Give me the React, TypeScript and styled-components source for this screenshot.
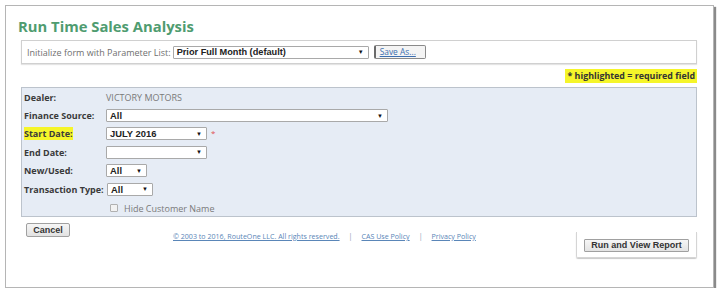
import React from "react";
import styled, { createGlobalStyle } from "styled-components";

const Global = createGlobalStyle`
  html, body { margin: 0; padding: 0; background: #ffffff; }
  body { font-family: "Open Sans", "Liberation Sans", sans-serif; }
`;

const Frame = styled.div`
  box-sizing: border-box;
  margin: 5px 0 0 5px;
  width: 709px;
  height: 283px;
  border: 1px solid #b5b5b5;
  box-shadow: 2px 2px 1px #8a8a8a;
  background: #fff;
  padding: 9px 16px 0 15px;
`;

const Title = styled.h1`
  margin: 0 0 3px -3px;
  font-family: "Open Sans", sans-serif;
  font-size: 14.8px;
  font-weight: 700;
  color: #4f9c70;
  line-height: 22px;
`;

const ParamBox = styled.div`
  box-sizing: border-box;
  height: 24px;
  border: 1px solid #d0d0d0;
  box-shadow: 0 1px 1px #e4e4e4;
  display: flex;
  align-items: center;
  padding-left: 5px;
  gap: 2px;
`;

const ParamLabel = styled.span`
  font-size: 9px;
  color: #6f6f6f;
  white-space: nowrap;
`;

const Select = styled.div<{ $w: number; $h?: number; $fs?: number }>`
  box-sizing: border-box;
  width: ${(p) => p.$w}px;
  height: ${(p) => p.$h ?? 13}px;
  border: 1px solid #a9a9a9;
  border-radius: 1px;
  background: #fff;
  display: flex;
  align-items: center;
  justify-content: space-between;
  padding: 0 4px 0 3px;
  font-family: "Liberation Sans", Arial, sans-serif;
  font-size: ${(p) => p.$fs ?? 9.4}px;
  font-weight: 700;
  color: #222;
  white-space: nowrap;
`;

const Arrow = styled.span`
  font-size: 6px;
  color: #111;
  line-height: 1;
`;

const SaveBtn = styled.button`
  box-sizing: border-box;
  margin-left: 3px;
  height: 14px;
  width: 52px;
  padding: 0 0 0 4px;
  text-align: left;
  border: 1px solid #8a8a8a;
  border-left: 2px solid #6a6a6a;
  border-radius: 2px;
  background: #f4f4f4;
  font-family: "Open Sans", sans-serif;
  font-size: 8.4px;
  color: #3d6fb0;
  text-decoration: underline;
  line-height: 12px;
`;

const NoteRow = styled.div`
  display: flex;
  justify-content: flex-end;
  margin-top: 5px;
  height: 14px;
`;

const Note = styled.span`
  background: #f5f52a;
  font-size: 8.9px;
  font-weight: 700;
  color: #333;
  padding: 0 2px;
  line-height: 14px;
`;

const Panel = styled.div`
  box-sizing: border-box;
  margin-top: 4px;
  height: 130px;
  background: #e6ecf5;
  border: 1px solid #bcc3cc;
  padding: 0 0 0 2px;
`;

const Row = styled.div<{ $h?: number }>`
  display: flex;
  align-items: center;
  height: ${(p) => p.$h ?? 18.4}px;
`;

const Label = styled.span<{ $hl?: boolean; $w?: number }>`
  width: ${(p) => p.$w ?? 82}px;
  flex: none;
  font-size: 9px;
  font-weight: 700;
  color: #3a3a3a;
  white-space: nowrap;
  span {
    background: ${(p) => (p.$hl ? "#f5f52a" : "transparent")};
  }
`;

const Value = styled.span`
  font-size: 9px;
  color: #7a7a7a;
`;

const Req = styled.span`
  color: #e05050;
  font-size: 8px;
  margin-left: 4px;
  margin-top: -3px;
`;

const Check = styled.span`
  box-sizing: border-box;
  width: 8px;
  height: 8px;
  border: 1px solid #b0b0b0;
  border-radius: 1px;
  background: #f2f2f2;
  margin: 0 6px 0 86px;
`;

const CheckLabel = styled.span`
  font-size: 9px;
  color: #7a7a7a;
`;

const Footer = styled.div`
  display: flex;
  align-items: flex-start;
  margin-top: 6px;
`;

const CancelBtn = styled.button`
  box-sizing: border-box;
  margin-left: 5px;
  width: 44px;
  height: 14px;
  padding: 0;
  border: 1px solid #a0a0a0;
  border-radius: 2px;
  background: linear-gradient(#f6f6f6, #e2e2e2);
  font-family: "Liberation Sans", Arial, sans-serif;
  font-size: 9px;
  font-weight: 700;
  color: #333;
  line-height: 12px;
`;

const Links = styled.div`
  margin: 8px 0 0 103px;
  display: flex;
  gap: 9px;
  font-size: 7.1px;
  color: #8a9ab0;
  white-space: nowrap;
`;

const Link = styled.a`
  color: #5a86b8;
  text-decoration: underline;
`;

const RunBox = styled.div`
  margin-left: auto;
  margin-top: 9px;
  box-sizing: border-box;
  width: 121px;
  height: 26px;
  border: 1px solid #d5d5d5;
  border-top: none;
  box-shadow: 0 1px 1px #c8c8c8;
  border-radius: 0 0 2px 2px;
  display: flex;
  justify-content: center;
  padding-top: 7px;
`;

const RunBtn = styled.button`
  box-sizing: border-box;
  width: 105px;
  height: 13px;
  padding: 0;
  border: 1px solid #a0a0a0;
  border-radius: 1px;
  background: linear-gradient(#f6f6f6, #e3e3e3);
  font-family: "Liberation Sans", Arial, sans-serif;
  font-size: 9px;
  font-weight: 700;
  color: #333;
  line-height: 11px;
`;

export default function App() {
  return (
    <>
      <Global />
      <Frame>
        <Title>Run Time Sales Analysis</Title>
        <ParamBox>
          <ParamLabel>Initialize form with Parameter List:</ParamLabel>
          <Select $w={196} $fs={9.2}>
            Prior Full Month (default)<Arrow>▼</Arrow>
          </Select>
          <SaveBtn>Save As...</SaveBtn>
        </ParamBox>
        <NoteRow>
          <Note>* highlighted = required field</Note>
        </NoteRow>
        <Panel>
          <Row>
            <Label>Dealer:</Label>
            <Value>VICTORY MOTORS</Value>
          </Row>
          <Row>
            <Label>Finance Source:</Label>
            <Select $w={282}>
              All<Arrow>▼</Arrow>
            </Select>
          </Row>
          <Row>
            <Label $hl>
              <span>Start Date:</span>
            </Label>
            <Select $w={101}>
              JULY 2016<Arrow>▼</Arrow>
            </Select>
            <Req>*</Req>
          </Row>
          <Row>
            <Label>End Date:</Label>
            <Select $w={101}>
              <span />
              <Arrow>▼</Arrow>
            </Select>
          </Row>
          <Row>
            <Label>New/Used:</Label>
            <Select $w={41}>
              All<Arrow>▼</Arrow>
            </Select>
          </Row>
          <Row>
            <Label $w={83}>Transaction Type:</Label>
            <Select $w={46}>
              All<Arrow>▼</Arrow>
            </Select>
          </Row>
          <Row $h={20}>
            <Check />
            <CheckLabel>Hide Customer Name</CheckLabel>
          </Row>
        </Panel>
        <Footer>
          <CancelBtn>Cancel</CancelBtn>
          <Links>
            <Link>© 2003 to 2016, RouteOne LLC. All rights reserved.</Link>
            <span>|</span>
            <Link>CAS Use Policy</Link>
            <span>|</span>
            <Link>Privacy Policy</Link>
          </Links>
          <RunBox>
            <RunBtn>Run and View Report</RunBtn>
          </RunBox>
        </Footer>
      </Frame>
    </>
  );
}
